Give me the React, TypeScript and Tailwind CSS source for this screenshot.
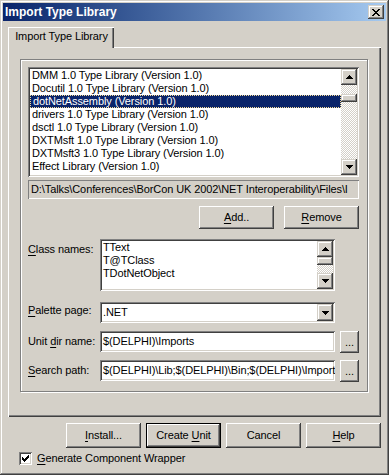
import type { ReactNode } from "react";

const raised =
    "shadow-[inset_-1px_-1px_#404040,inset_1px_1px_#ffffff,inset_-2px_-2px_#808080]";
const scrollRaised =
    "shadow-[inset_-1px_-1px_#404040,inset_1px_1px_#d4d0c8,inset_-2px_-2px_#808080,inset_2px_2px_#ffffff]";
const sunken =
    "shadow-[inset_1px_1px_#808080,inset_-1px_-1px_#ffffff,inset_2px_2px_#404040,inset_-2px_-2px_#d4d0c8]";
const checker =
    "bg-[repeating-conic-gradient(#d4d0c8_0_25%,#ffffff_0_50%)] bg-[length:2px_2px]";

const typeLibraries = [
    "DMM 1.0 Type Library (Version 1.0)",
    "Docutil 1.0 Type Library (Version 1.0)",
    "dotNetAssembly (Version 1.0)",
    "drivers 1.0 Type Library (Version 1.0)",
    "dsctl 1.0 Type Library (Version 1.0)",
    "DXTMsft 1.0 Type Library (Version 1.0)",
    "DXTMsft3 1.0 Type Library (Version 1.0)",
    "Effect Library (Version 1.0)",
    "Enterprise 1.0 Type Library (Version 1.0)",
];

const classNames = ["TText", "T@TClass", "TDotNetObject"];

const libraryPath =
    "D:\\Talks\\Conferences\\BorCon UK 2002\\NET Interoperability\\Files\\I";
const unitDir = "$(DELPHI)\\Imports";
const searchPath = "$(DELPHI)\\Lib;$(DELPHI)\\Bin;$(DELPHI)\\Imports";

function Key({ children }: { children: ReactNode }) {
    return <span className="underline decoration-1 underline-offset-[2px]">{children}</span>;
}

function Arrow({ down = false }: { down?: boolean }) {
    return (
        <svg width="7" height="4" viewBox="0 0 7 4" shapeRendering="crispEdges" className={down ? "rotate-180" : ""}>
            <path d="M3 0h1v1h1v1h1v1h1v1H0V3h1V2h1V1h1z" fill="#000" />
        </svg>
    );
}

function ArrowButton({ down = false, className = "h-[16px]" }: { down?: boolean; className?: string }) {
    return (
        <div className={`flex w-[16px] shrink-0 items-center justify-center bg-[#d4d0c8] ${scrollRaised} ${className}`}>
            <Arrow down={down} />
        </div>
    );
}

function ScrollBar({ offset }: { offset: string }) {
    return (
        <div className="flex w-[16px] shrink-0 flex-col">
            <ArrowButton />
            <div className={`flex flex-1 flex-col ${checker}`}>
                <div className={offset} />
                <div className={`h-[8px] bg-[#d4d0c8] ${scrollRaised}`} />
            </div>
            <ArrowButton down />
        </div>
    );
}

function Button({
    children,
    className = "w-[75px] h-[23px]",
    isDefault = false,
}: {
    children: ReactNode;
    className?: string;
    isDefault?: boolean;
}) {
    if (isDefault) {
        return (
            <div className={`border border-black ${className}`}>
                <div className={`flex h-full items-center justify-center ${raised}`}>
                    <span>{children}</span>
                </div>
            </div>
        );
    }
    return (
        <div className={`flex items-center justify-center ${raised} ${className}`}>
            <span>{children}</span>
        </div>
    );
}

function CheckMark() {
    return (
        <svg width="7" height="7" viewBox="0 0 7 7" shapeRendering="crispEdges">
            <path
                d="M6 0h1v3H6v1H5v1H4v1H3v1H2V6H1V5H0V2h1v1h1v1h1V3h1V2h1V1h1z"
                fill="#000"
            />
        </svg>
    );
}

function CloseGlyph() {
    return (
        <svg width="8" height="7" viewBox="0 0 8 7" shapeRendering="crispEdges">
            <path
                d="M0 0h2v1h1v1h2V1h1V0h2v1H7v1H6v1H5v1h1v1h1v1h1v1H6V6H5V5H3v1H2v1H0V6h1V5h1V4h1V3H2V2H1V1H0z"
                fill="#000"
            />
        </svg>
    );
}

export default function App() {
    return (
        <div className="h-[475px] w-[389px] overflow-hidden bg-[#d4d0c8] p-[3px] font-['Liberation_Sans',Arial,sans-serif] text-[11px] leading-[13px] tracking-[-0.1px] text-black shadow-[inset_-1px_-1px_#404040,inset_1px_1px_#d4d0c8,inset_-2px_-2px_#808080,inset_2px_2px_#ffffff]">
            {/* title bar */}
            <div className="flex h-[18px] items-center justify-between bg-linear-to-r from-[#0a246a] to-[#a6caf0] px-[2px]">
                <span className="text-[12px] font-bold tracking-normal text-white">Import Type Library</span>
                <div className={`flex h-[14px] w-[16px] items-center justify-center bg-[#d4d0c8] ${scrollRaised}`}>
                    <CloseGlyph />
                </div>
            </div>

            {/* tab strip */}
            <div className="mx-[5px] mt-[6px] flex">
                <div className="relative z-10 -mb-px h-[21px] w-[106px] border-l border-t border-white bg-[#d4d0c8] pt-[2px] text-center shadow-[inset_-1px_0_#404040,inset_-2px_0_#808080]">
                    Import Type Library
                </div>
            </div>

            {/* tab panel */}
            <div className="mx-[5px] h-[370px] px-[12px] pt-[12px] shadow-[inset_1px_1px_#ffffff,inset_-1px_-1px_#404040,inset_-2px_-2px_#808080]">
                <div className="flex h-[333px] w-[348px] flex-col border border-[#808080] pl-[7px] pt-[7px] shadow-[inset_1px_1px_#ffffff,1px_1px_#ffffff]">
                    {/* type library list */}
                    <div className={`flex h-[110px] w-[331px] bg-white p-[2px] ${sunken}`}>
                        <div className="flex-1 overflow-hidden">
                            {typeLibraries.map((lib, i) =>
                                i === 2 ? (
                                    <div
                                        key={lib}
                                        className="h-[13px] whitespace-nowrap border border-dotted border-[#f5db95] bg-[#0a246a] pl-[2px] leading-[11px] text-white"
                                    >
                                        {lib}
                                    </div>
                                ) : (
                                    <div key={lib} className="h-[13px] whitespace-nowrap pl-[2px]">
                                        {lib}
                                    </div>
                                )
                            )}
                        </div>
                        <ScrollBar offset="h-[9px]" />
                    </div>

                    {/* selected library path */}
                    <div className="mt-[3px] flex h-[19px] w-[331px] items-center overflow-hidden whitespace-nowrap pl-[3px] shadow-[inset_1px_1px_#808080,inset_-1px_-1px_#ffffff]">
                        {libraryPath}
                    </div>

                    <div className="mt-[7px] flex w-[331px] justify-end gap-[10px]">
                        <Button>
                            <Key>A</Key>dd..
                        </Button>
                        <Button>
                            <Key>R</Key>emove
                        </Button>
                    </div>

                    {/* class names */}
                    <div className="mt-[10px] flex">
                        <div className="mt-[4px] w-[72px]">
                            <Key>C</Key>lass names:
                        </div>
                        <div className={`flex h-[52px] w-[235px] bg-white p-[2px] ${sunken}`}>
                            <div className="flex-1 overflow-hidden">
                                {classNames.map((name) => (
                                    <div key={name} className="h-[13px] pl-[1px]">
                                        {name}
                                    </div>
                                ))}
                            </div>
                            <ScrollBar offset="h-0" />
                        </div>
                    </div>

                    {/* palette page */}
                    <div className="mt-[11px] flex">
                        <div className="mt-[2px] w-[72px]">
                            <Key>P</Key>alette page:
                        </div>
                        <div className={`flex h-[21px] w-[235px] items-center bg-white p-[2px] ${sunken}`}>
                            <div className="flex-1 pl-[1px]">.NET</div>
                            <ArrowButton down className="h-[17px]" />
                        </div>
                    </div>

                    {/* unit dir */}
                    <div className="mt-[8px] flex">
                        <div className="mt-[4px] w-[72px]">
                            Unit <Key>d</Key>ir name:
                        </div>
                        <div className={`flex h-[21px] w-[235px] items-center overflow-hidden whitespace-nowrap bg-white pl-[3px] ${sunken}`}>
                            {unitDir}
                        </div>
                        <Button className="ml-[5px] h-[22px] w-[19px]">...</Button>
                    </div>

                    {/* search path */}
                    <div className="mt-[7px] flex">
                        <div className="mt-[4px] w-[72px]">
                            <Key>S</Key>earch path:
                        </div>
                        <div className={`flex h-[21px] w-[235px] items-center overflow-hidden whitespace-nowrap bg-white pl-[3px] ${sunken}`}>
                            {searchPath}
                        </div>
                        <Button className="ml-[5px] h-[22px] w-[19px]">...</Button>
                    </div>
                </div>
            </div>

            {/* dialog buttons */}
            <div className="mr-[5px] mt-[6px] flex justify-end gap-[5px]">
                <Button className="h-[25px] w-[75px]">
                    <Key>I</Key>nstall...
                </Button>
                <Button className="h-[25px] w-[75px]" isDefault>
                    Create <Key>U</Key>nit
                </Button>
                <Button className="h-[25px] w-[75px]">Cancel</Button>
                <Button className="h-[25px] w-[75px]">
                    <Key>H</Key>elp
                </Button>
            </div>

            <div className="ml-[16px] mt-[4px] flex items-center gap-[5px]">
                <div className={`flex h-[13px] w-[13px] items-center justify-center bg-white ${sunken}`}>
                    <CheckMark />
                </div>
                <span>
                    <Key>G</Key>enerate Component Wrapper
                </span>
            </div>
        </div>
    );
}
